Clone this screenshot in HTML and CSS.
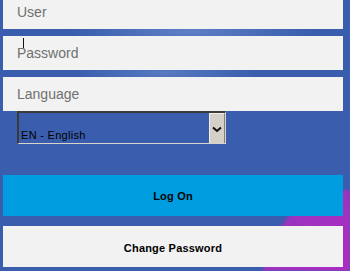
FILE: index.html
```html
<!DOCTYPE html>
<html>
<head>
<meta charset="utf-8">
<link rel="stylesheet" href="styles.css">
</head>
<body>
<div class="blob"></div>
<div class="form">
  <div class="field">User</div>
  <div class="field">Password<span class="cursor"></span></div>
  <div class="field">Language</div>
  <div class="select">
    <span class="select-text">EN - English</span>
    <span class="select-btn">
      <svg width="10" height="7" viewBox="0 0 10 7"><path d="M1 1.5 L5 5 L9 1.5" fill="none" stroke="#111" stroke-width="2"/></svg>
    </span>
  </div>
  <div class="btn btn-primary">Log On</div>
  <div class="btn btn-secondary">Change Password</div>
</div>
</body>
</html>
```
FILE: styles.css
```css
html, body {
  margin: 0;
  padding: 0;
  height: 271px;
  overflow: hidden;
}
body {
  background: radial-gradient(ellipse 120px 20px at 190px 32px, rgba(120,150,215,0.6), rgba(120,150,215,0) 100%),
              radial-gradient(ellipse 90px 14px at 165px 73px, rgba(120,150,215,0.5), rgba(120,150,215,0) 100%),
              #3a5ead;
  font-family: "Liberation Sans", Arial, sans-serif;
  position: relative;
}
.blob {
  position: absolute;
  left: 250px;
  top: 190px;
  width: 100px;
  height: 81px;
  background:
    radial-gradient(ellipse 28px 33px at 120px 40px, #a630c2 96%, rgba(166,48,194,0) 100%),
    radial-gradient(ellipse 143px 139px at 150px 110px, #b22fc6 0%, #a92ec2 60%, #9a34be 97%, rgba(154,52,190,0) 100%);
  filter: blur(1px);
}
.form {
  position: relative;
  display: flex;
  flex-direction: column;
  width: 340px;
  margin-left: 3px;
  margin-top: -5px;
}
.field {
  position: relative;
  height: 34px;
  background: #f2f2f2;
  color: #707070;
  font-size: 14px;
  line-height: 34px;
  padding-left: 14px;
  margin-bottom: 7px;
}
.field:nth-child(3) {
  margin-bottom: 0;
}
.cursor {
  position: absolute;
  left: 20px;
  top: 2px;
  width: 1px;
  height: 10px;
  background: #111;
}
.select {
  display: flex;
  align-items: stretch;
  width: 209px;
  height: 33px;
  margin-left: 14px;
  box-sizing: border-box;
  border-top: 2px solid #3a3a3a;
  border-left: 2px solid #3a3a3a;
  border-bottom: 1px solid #d8d4cc;
  border-right: 1px solid #d8d4cc;
  margin-bottom: 31px;
}
.select-text {
  flex: 1;
  display: flex;
  align-items: flex-end;
  font-size: 11px;
  color: #000;
  padding-left: 2px;
  padding-bottom: 1px;
  letter-spacing: 0.3px;
  line-height: 13px;
}
.select-btn {
  width: 14px;
  background: #d4d0c8;
  border-left: 1px solid #f0eee8;
  border-top: 1px solid #f0eee8;
  border-right: 1px solid #808080;
  display: flex;
  align-items: center;
  justify-content: center;
  padding-top: 2px;
}
.btn {
  height: 41px;
  display: flex;
  align-items: center;
  justify-content: center;
  font-size: 11px;
  font-weight: bold;
  color: #000;
  letter-spacing: 0.2px;
}
.btn-primary {
  background: #009de0;
  margin-bottom: 10px;
}
.btn-secondary {
  background: #f2f2f2;
  padding-top: 2px;
  box-sizing: border-box;
}
```
